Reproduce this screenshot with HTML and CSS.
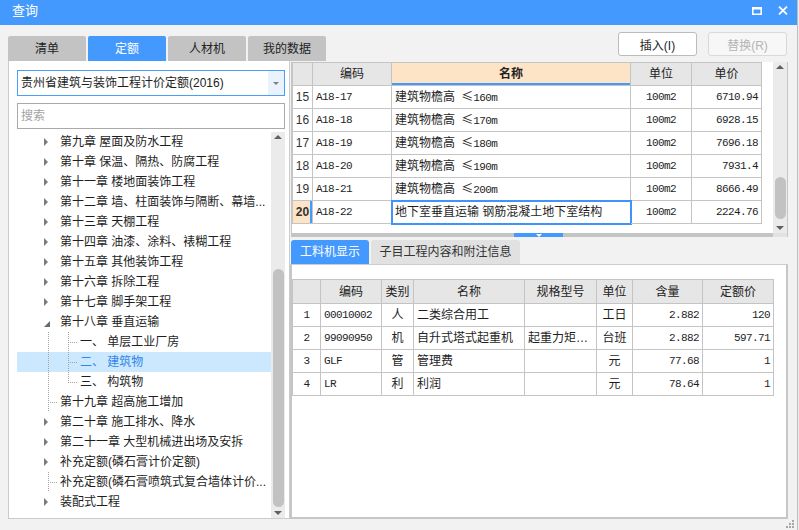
FILE: index.html
```html
<!DOCTYPE html>
<html lang="zh-CN">
<head>
<meta charset="utf-8">
<title>查询</title>
<link rel="stylesheet" href="styles.css">
</head>
<body>
<div class="win">
  <header class="titlebar">
    <span class="title">查询</span>
    <span class="tb-btns">
      <svg class="tb-max" width="10" height="8" viewBox="0 0 10 8"><path d="M0 0h10v8H0z M1.6 2.6v3.8h6.8V2.6z" fill="#fff" fill-rule="evenodd"/></svg>
      <svg class="tb-close" width="10" height="9" viewBox="0 0 10 9"><path d="M1 0.6L9 8.4M9 0.6L1 8.4" stroke="#fff" stroke-width="1.8" fill="none"/></svg>
    </span>
  </header>

  <div class="main">
    <section class="left">
      <nav class="tabs">
        <span class="tab">清单</span>
        <span class="tab on">定额</span>
        <span class="tab">人材机</span>
        <span class="tab">我的数据</span>
      </nav>
      <div class="lp">
        <div class="select">
          <span class="sel-text">贵州省建筑与装饰工程计价定额(2016)</span>
          <span class="sel-btn"><i class="caret"></i></span>
        </div>
        <div class="search">搜索</div>
        <div class="treebox">
          <ul class="tree">
            <li><i class="ar"></i><span class="tx">第九章 屋面及防水工程</span></li>
            <li><i class="ar"></i><span class="tx">第十章 保温、隔热、防腐工程</span></li>
            <li><i class="ar"></i><span class="tx">第十一章 楼地面装饰工程</span></li>
            <li><i class="ar"></i><span class="tx">第十二章 墙、柱面装饰与隔断、幕墙...</span></li>
            <li><i class="ar"></i><span class="tx">第十三章 天棚工程</span></li>
            <li><i class="ar"></i><span class="tx">第十四章 油漆、涂料、裱糊工程</span></li>
            <li><i class="ar"></i><span class="tx">第十五章 其他装饰工程</span></li>
            <li><i class="ar"></i><span class="tx">第十六章 拆除工程</span></li>
            <li><i class="ar"></i><span class="tx">第十七章 脚手架工程</span></li>
            <li><i class="ar open"></i><span class="tx">第十八章 垂直运输</span></li>
            <li class="ch"><span class="tx">一、 单层工业厂房</span></li>
            <li class="ch sel"><span class="tx">二、 建筑物</span></li>
            <li class="ch last"><span class="tx">三、 构筑物</span></li>
            <li class="leaf"><i class="ar none"></i><span class="tx">第十九章 超高施工增加</span></li>
            <li><i class="ar"></i><span class="tx">第二十章 施工排水、降水</span></li>
            <li><i class="ar"></i><span class="tx">第二十一章 大型机械进出场及安拆</span></li>
            <li><i class="ar"></i><span class="tx">补充定额(磷石膏计价定额)</span></li>
            <li class="leaf"><i class="ar none"></i><span class="tx">补充定额(磷石膏喷筑式复合墙体计价...</span></li>
            <li><i class="ar"></i><span class="tx">装配式工程</span></li>
          </ul>
          <div class="vs tree-vs">
            <span class="vs-up"><i></i></span>
            <span class="vs-track"><i class="vs-thumb"></i></span>
            <span class="vs-down"><i></i></span>
          </div>
        </div>
      </div>
    </section>

    <section class="right">
      <div class="btns">
        <button class="btn">插入(I)</button>
        <button class="btn dis">替换(R)</button>
      </div>

      <div class="upper">
        <div class="u-body">
          <div class="grid ugrid">
            <div class="c h"></div>
            <div class="c h">编码</div>
            <div class="c h hsel">名称</div>
            <div class="c h">单位</div>
            <div class="c h">单价</div>

            <div class="c ctr rn">15</div>
            <div class="c m">A18-17</div>
            <div class="c"><span>建筑物檐高 <span class="le">≤</span><span class="m">160m</span></span></div>
            <div class="c ctr m">100m2</div>
            <div class="c r m">6710.94</div>

            <div class="c ctr rn">16</div>
            <div class="c m">A18-18</div>
            <div class="c"><span>建筑物檐高 <span class="le">≤</span><span class="m">170m</span></span></div>
            <div class="c ctr m">100m2</div>
            <div class="c r m">6928.15</div>

            <div class="c ctr rn">17</div>
            <div class="c m">A18-19</div>
            <div class="c"><span>建筑物檐高 <span class="le">≤</span><span class="m">180m</span></span></div>
            <div class="c ctr m">100m2</div>
            <div class="c r m">7696.18</div>

            <div class="c ctr rn">18</div>
            <div class="c m">A18-20</div>
            <div class="c"><span>建筑物檐高 <span class="le">≤</span><span class="m">190m</span></span></div>
            <div class="c ctr m">100m2</div>
            <div class="c r m">7931.4</div>

            <div class="c ctr rn">19</div>
            <div class="c m">A18-21</div>
            <div class="c"><span>建筑物檐高 <span class="le">≤</span><span class="m">200m</span></span></div>
            <div class="c ctr m">100m2</div>
            <div class="c r m">8666.49</div>

            <div class="c ctr rn cur">20</div>
            <div class="c m">A18-22</div>
            <div class="c active">地下室垂直运输 钢筋混凝土地下室结构</div>
            <div class="c ctr m">100m2</div>
            <div class="c r m">2224.76</div>
          </div>
          <div class="u-fill"></div>
          <div class="vs up-vs">
            <span class="vs-up"><i></i></span>
            <span class="vs-track"><i class="vs-thumb"></i></span>
            <span class="vs-down"><i></i></span>
          </div>
        </div>
        <div class="split">
          <span class="split-bar"><span class="split-h"><i></i></span></span>
          <span class="split-corner"></span>
        </div>
      </div>

      <nav class="ltabs">
        <span class="ltab on">工料机显示</span>
        <span class="ltab wide">子目工程内容和附注信息</span>
      </nav>

      <div class="lpanel">
        <div class="grid lgrid">
          <div class="c h"></div>
          <div class="c h">编码</div>
          <div class="c h">类别</div>
          <div class="c h">名称</div>
          <div class="c h">规格型号</div>
          <div class="c h">单位</div>
          <div class="c h">含量</div>
          <div class="c h">定额价</div>

          <div class="c ctr m">1</div>
          <div class="c m">00010002</div>
          <div class="c ctr">人</div>
          <div class="c">二类综合用工</div>
          <div class="c"></div>
          <div class="c ctr">工日</div>
          <div class="c r m">2.882</div>
          <div class="c r m">120</div>

          <div class="c ctr m">2</div>
          <div class="c m">99090950</div>
          <div class="c ctr">机</div>
          <div class="c">自升式塔式起重机</div>
          <div class="c">起重力矩…</div>
          <div class="c ctr">台班</div>
          <div class="c r m">2.882</div>
          <div class="c r m">597.71</div>

          <div class="c ctr m">3</div>
          <div class="c m">GLF</div>
          <div class="c ctr">管</div>
          <div class="c">管理费</div>
          <div class="c"></div>
          <div class="c ctr">元</div>
          <div class="c r m">77.68</div>
          <div class="c r m">1</div>

          <div class="c ctr m">4</div>
          <div class="c m">LR</div>
          <div class="c ctr">利</div>
          <div class="c">利润</div>
          <div class="c"></div>
          <div class="c ctr">元</div>
          <div class="c r m">78.64</div>
          <div class="c r m">1</div>
        </div>
      </div>
    </section>
  </div>

  <footer class="foot">
    <svg class="grip" width="8" height="8" viewBox="0 0 8 8" fill="#a6a6a6">
      <rect x="6" y="0" width="2" height="2"/>
      <rect x="3" y="3" width="2" height="2"/><rect x="6" y="3" width="2" height="2"/>
      <rect x="0" y="6" width="2" height="2"/><rect x="3" y="6" width="2" height="2"/><rect x="6" y="6" width="2" height="2"/>
    </svg>
  </footer>
</div>
</body>
</html>
```

FILE: styles.css
```css
* { box-sizing: border-box; margin: 0; padding: 0; }

html, body {
  width: 799px;
  height: 530px;
  overflow: hidden;
  background: #ececec;
}

body {
  font-family: "Liberation Sans", "Noto Sans CJK SC", sans-serif;
  font-size: 12px;
  color: #222;
}

.win {
  width: 798px;
  height: 530px;
  background: #f2f2f2;
  border-right: 1px solid #bdbdbd;
  display: flex;
  flex-direction: column;
}

/* ---------- title bar ---------- */
.titlebar {
  height: 25px;
  flex: none;
  background: #4399fe;
  color: #fff;
  display: flex;
  align-items: center;
  padding: 0 9px 4px 12px;
}
.title { flex: 1; font-size: 13px; line-height: 16px; }
.tb-btns { display: flex; align-items: center; gap: 16px; }
.tb-max { display: block; margin-top: 1px; }
.tb-close { display: block; }

/* ---------- main ---------- */
.main {
  flex: 1;
  display: flex;
  padding-left: 8px;
  min-height: 0;
}

.left {
  width: 282px;
  flex: none;
  margin-top: 11px;
  display: flex;
  flex-direction: column;
  position: relative;
  z-index: 1;
}

.tabs { display: flex; gap: 2px; height: 25px; }
.tab {
  flex: none;
  width: 78px;
  background: #c3c3c3;
  border-radius: 2px 2px 0 0;
  display: flex;
  align-items: center;
  justify-content: center;
  color: #222;
  line-height: 16px;
}
.tab.on { background: #4399fe; color: #fff; }

.lp {
  height: 458px;
  background: #fff;
  border: 1px solid #cbcbcb;
  border-top: 0;
  padding: 9px 4px 0 8px;
  display: flex;
  flex-direction: column;
}

.select {
  height: 26px;
  flex: none;
  border: 1px solid #4a9ef8;
  display: flex;
  align-items: stretch;
}
.sel-text {
  flex: 1;
  padding-left: 3px;
  line-height: 24px;
  white-space: nowrap;
  color: #1e1e1e;
}
.sel-btn {
  width: 16px;
  background: #e9f2fd;
  display: flex;
  align-items: center;
  justify-content: center;
}
.caret {
  display: block;
  width: 0;
  height: 0;
  border-top: 3px solid #808080;
  border-left: 3px solid transparent;
  border-right: 3px solid transparent;
}

.search {
  height: 26px;
  flex: none;
  margin-top: 7px;
  border: 1px solid #aaaaaa;
  padding-left: 3px;
  line-height: 24px;
  color: #a3a3a3;
}

.treebox {
  flex: 1;
  margin-top: 3px;
  display: flex;
  min-height: 0;
}

.tree {
  list-style: none;
  flex: 1;
  min-width: 0;
  overflow: hidden;
}
.tree li {
  height: 20px;
  display: flex;
  align-items: center;
  padding-left: 27px;
  white-space: nowrap;
  line-height: 20px;
  color: #1e1e1e;
  background-repeat: no-repeat;
}
.tree .tx { min-width: 0; }
.ar {
  flex: none;
  width: 16px;
  height: 20px;
  display: flex;
  align-items: center;
}
.ar::before {
  content: "";
  display: block;
  width: 0;
  height: 0;
  border-left: 4px solid #7a7a7a;
  border-top: 4px solid transparent;
  border-bottom: 4px solid transparent;
}
.ar.open::before {
  border-left: 6px solid transparent;
  border-bottom: 6px solid #6a6a6a;
  border-top: 0;
  margin-top: 4px;
}
.ar.none::before { display: none; }

/* tree guide lines */
.tree li.ch {
  padding-left: 63px;
  background-image:
    repeating-linear-gradient(to bottom, #a2a2a2 0 1px, transparent 1px 2px),
    repeating-linear-gradient(to bottom, #a2a2a2 0 1px, transparent 1px 2px),
    repeating-linear-gradient(to right, #a2a2a2 0 1px, transparent 1px 2px);
  background-size: 1px 20px, 1px 20px, 10px 1px;
  background-position: 31px 0, 51px 0, 51px 10px;
}
.tree li.ch.last {
  background-size: 1px 20px, 1px 11px, 10px 1px;
}
.tree li.leaf {
  background-image:
    repeating-linear-gradient(to bottom, #a2a2a2 0 1px, transparent 1px 2px),
    repeating-linear-gradient(to right, #a2a2a2 0 1px, transparent 1px 2px);
  background-size: 1px 20px, 10px 1px;
  background-position: 31px 0, 31px 10px;
}
.tree li.sel {
  background-color: #cce8ff;
  color: #3485e8;
}

/* scrollbars */
.vs {
  width: 14px;
  flex: none;
  background: #ebebeb;
  display: flex;
  flex-direction: column;
  align-items: center;
}
.vs-up, .vs-down {
  flex: none;
  height: 12px;
  display: flex;
  justify-content: center;
}
.vs-up { align-items: flex-start; padding-top: 3px; }
.vs-down { height: 10px; align-items: flex-start; padding-top: 3px; }
.vs-up i, .vs-down i {
  display: block;
  width: 0;
  height: 0;
  border-left: 4px solid transparent;
  border-right: 4px solid transparent;
}
.vs-up i { border-bottom: 4px solid #606060; }
.vs-down i { border-top: 4px solid #606060; }
.vs-track { flex: 1; display: flex; flex-direction: column; align-items: center; }
.vs-thumb {
  display: block;
  width: 11px;
  background: #c2c2c2;
  border-radius: 5.5px;
}
.tree-vs .vs-thumb { margin-top: 125px; height: 238px; }
.up-vs .vs-thumb { margin-top: 103px; height: 42px; }

/* ---------- right ---------- */
.right {
  width: 507px;
  flex: none;
  display: flex;
  flex-direction: column;
}

.btns {
  height: 24px;
  margin: 7px 10px 0 0;
  display: flex;
  justify-content: flex-end;
  gap: 11px;
}
.btn {
  width: 79px;
  height: 24px;
  border: 1px solid #bcbcbc;
  border-radius: 3px;
  background: #fff;
  font-family: "Liberation Sans", "Noto Sans CJK SC", sans-serif;
  font-size: 12px;
  color: #1e1e1e;
}
.btn.dis {
  border-color: #d9d9d9;
  background: #f7f7f7;
  color: #b4b4b4;
}

.upper {
  margin: 6px 0 0 1px;
  width: 497px;
  height: 175px;
  background: #fff;
  border-left: 1px solid #c6c6c6;
  border-right: 1px solid #c6c6c6;
  display: flex;
  flex-direction: column;
}
.u-body { height: 171px; display: flex; }
.u-fill { flex: 1; }

.grid {
  display: grid;
  align-self: flex-start;
  border-left: 1px solid #c4c4c4;
  border-top: 1px solid #c4c4c4;
}
.ugrid {
  width: 470px;
  flex: none;
  grid-template-columns: 20px 79px 239px 61px 70px;
  grid-auto-rows: 23px;
}
.c {
  border-right: 1px solid #c4c4c4;
  border-bottom: 1px solid #c4c4c4;
  display: flex;
  align-items: center;
  padding: 0 3px;
  white-space: nowrap;
  overflow: hidden;
  line-height: 16px;
  color: #1e1e1e;
}
.h { background: #e6e6e6; justify-content: center; color: #222; }
.hsel {
  background: #fde4c6;
  font-weight: bold;
  box-shadow: inset 0 -2px 0 #4399fe;
}
.ctr { justify-content: center; }
.r { justify-content: flex-end; }
.m {
  font-family: "Liberation Mono", "Noto Sans CJK SC", monospace;
  font-size: 11px;
  letter-spacing: -0.6px;
}
.le { font-family: "Noto Sans CJK SC", sans-serif; margin-left: 3px; }
.rn { font-size: 12px; padding: 0; color: #333; }
.rn.cur {
  background: #fde4c6;
  font-weight: bold;
  box-shadow: inset -2px 0 0 #4399fe;
}
.active {
  outline: 2px solid #3f93fa;
  outline-offset: -1px;
}

.split { height: 4px; display: flex; }
.split-bar { flex: 1; background: #c4c4c4; }
.split-h {
  display: flex;
  justify-content: center;
  width: 49px;
  height: 4px;
  margin-left: 222px;
  background: #4399fe;
}
.split-h i {
  display: block;
  width: 0;
  height: 0;
  margin-top: 1px;
  border-top: 3px solid #fff;
  border-left: 3px solid transparent;
  border-right: 3px solid transparent;
}
.split-corner { width: 14px; background: #e2e2e2; }

.ltabs {
  display: flex;
  gap: 2px;
  height: 24px;
  margin: 3px 0 0 1px;
}
.ltab {
  flex: none;
  width: 78px;
  border-radius: 3px 3px 0 0;
  background: #e1e1e1;
  display: flex;
  align-items: center;
  justify-content: center;
  color: #333;
  line-height: 16px;
}
.ltab.on { background: #4399fe; color: #fff; }
.ltab.wide { width: 149px; }

.lpanel {
  width: 498px;
  height: 255px;
  background: #fff;
  border: 2px solid #c6c6c6;
  border-top: 1px solid #cdcdcd;
  padding-top: 14px;
}
.lgrid {
  width: 482px;
  grid-template-columns: 28px 61px 32px 111px 72px 36px 70px 71px;
  grid-template-rows: 24px;
  grid-auto-rows: 23px;
}

/* ---------- footer ---------- */
.foot {
  height: 11px;
  flex: none;
  display: flex;
  justify-content: flex-end;
  padding: 1px 3px 0 0;
}
.grip { display: block; }
```
